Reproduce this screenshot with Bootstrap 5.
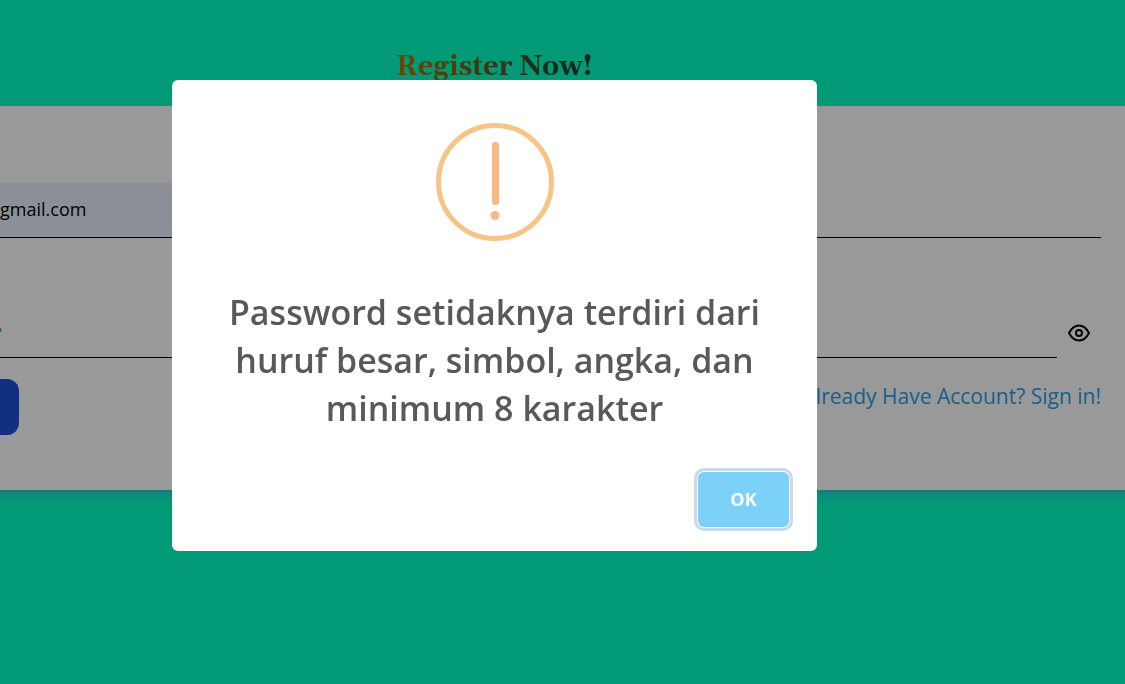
<!DOCTYPE html>
<html lang="id">
<head>
<meta charset="utf-8">
<meta name="viewport" content="width=device-width, initial-scale=1">
<title>Register Now!</title>
<link href="https://cdn.jsdelivr.net/npm/bootstrap@5.3.0/dist/css/bootstrap.min.css" rel="stylesheet">
<style>
  body { background: #03ffc5; font-family: "Open Sans", sans-serif; }
  .page-head { padding: 49px 136px 21px 0; }
  .page-title {
    font: bold 27px/36px Gelasio, Georgia, "Liberation Serif", serif;
    background: linear-gradient(to right, #b87800, #00403c);
    -webkit-background-clip: text; background-clip: text; color: transparent;
  }
  .register-panel { background: #fff; padding: 77px 24px 55px 0; }
  .panel-shadow { height: 10px; background: linear-gradient(#30c8d4, #03ffc5); }
  .line-input { border: 0; border-bottom: 1px solid #000; border-radius: 0; height: 55px; padding: 0 0 2px; font-size: 18px; color: #000; background: #fff; }
  .email-input { background: #e8f0fe; }
  .email-row { margin-bottom: 65px; }
  .password-row { margin-bottom: 21px; }
  .password-input { background: radial-gradient(circle at -1px 27px, #3490dc 2px, #fff 3px); }
  .eye-button { width: 44px; height: 52px; }
  .submit-button { width: 31px; height: 56px; margin-left: -12px; border-radius: 12px; background: #1d4fd8; }
  .signin-link { color: #2f9ee6; font-size: 21px; line-height: 35px; }
  .modal-backdrop { --bs-backdrop-opacity: .4; }
  .alert-modal { padding: 80px 136px 0 0; }
  .alert-dialog { width: 645px; max-width: 100%; }
  .alert-box { border: 0; border-radius: 6px; padding: 42px 24px 20px; }
  .alert-text { font-size: 34px; line-height: 48px; color: #595959; padding: 0 24px; margin: 46px 0 36px; }
  .ok-button { width: 91px; height: 55px; margin: 4px; border-radius: 6px; background: #7cd1f9; color: #fff; font-size: 18px; box-shadow: 0 0 0 1px #fff, 0 0 0 4px #c8d9e8; }
</style>
</head>
<body>
<header class="page-head text-center">
  <h1 class="page-title d-inline-block align-top m-0">Register Now!</h1>
</header>
<main class="register-panel">
  <form>
    <div class="email-row d-flex gap-4">
      <input class="form-control line-input email-input" type="text" aria-label="Email" value="gmail.com">
      <input class="form-control line-input" type="text" aria-label="Name">
    </div>
    <div class="password-row d-flex align-items-end">
      <input class="form-control line-input password-input" type="password" aria-label="Password">
      <button class="eye-button btn p-0 border-0 flex-shrink-0" type="button" aria-label="Show password">
        <svg width="24" height="24" viewBox="0 0 24 24" fill="none" stroke="#000" stroke-width="2"><path d="M2 12Q6 4.500 12 4.500T22 12Q18 19.500 12 19.500T2 12Z"/><circle cx="12" cy="12" r="3"/></svg>
      </button>
    </div>
    <div class="d-flex justify-content-between align-items-start">
      <button class="submit-button btn p-0 border-0" type="submit" aria-label="Register"></button>
      <a class="signin-link text-decoration-none" href="#">Already Have Account? Sign in!</a>
    </div>
  </form>
</main>
<div class="panel-shadow"></div>
<div class="modal-backdrop show"></div>
<div class="modal alert-modal d-block" role="dialog" aria-modal="true" aria-labelledby="alert-text">
  <div class="alert-dialog mx-auto">
    <div class="modal-content alert-box">
      <svg class="d-block mx-auto" width="120" height="120" viewBox="0 0 120 120" aria-hidden="true">
        <circle cx="60" cy="60" r="56.500" fill="none" stroke="#f8c486" stroke-width="5"/>
        <rect x="57" y="20" width="7" height="63" rx="3" fill="#f8b983"/>
        <circle cx="60" cy="93.500" r="4.500" fill="#f8b983"/>
      </svg>
      <p class="alert-text text-center fw-semibold" id="alert-text">Password setidaknya terdiri dari huruf besar, simbol, angka, dan minimum 8 karakter</p>
      <div class="text-end"><button class="ok-button btn p-0 border-0 fw-bold" type="button">OK</button></div>
    </div>
  </div>
</div>
<script src="https://cdn.jsdelivr.net/npm/bootstrap@5.3.0/dist/js/bootstrap.bundle.min.js"></script>
</body>
</html>
